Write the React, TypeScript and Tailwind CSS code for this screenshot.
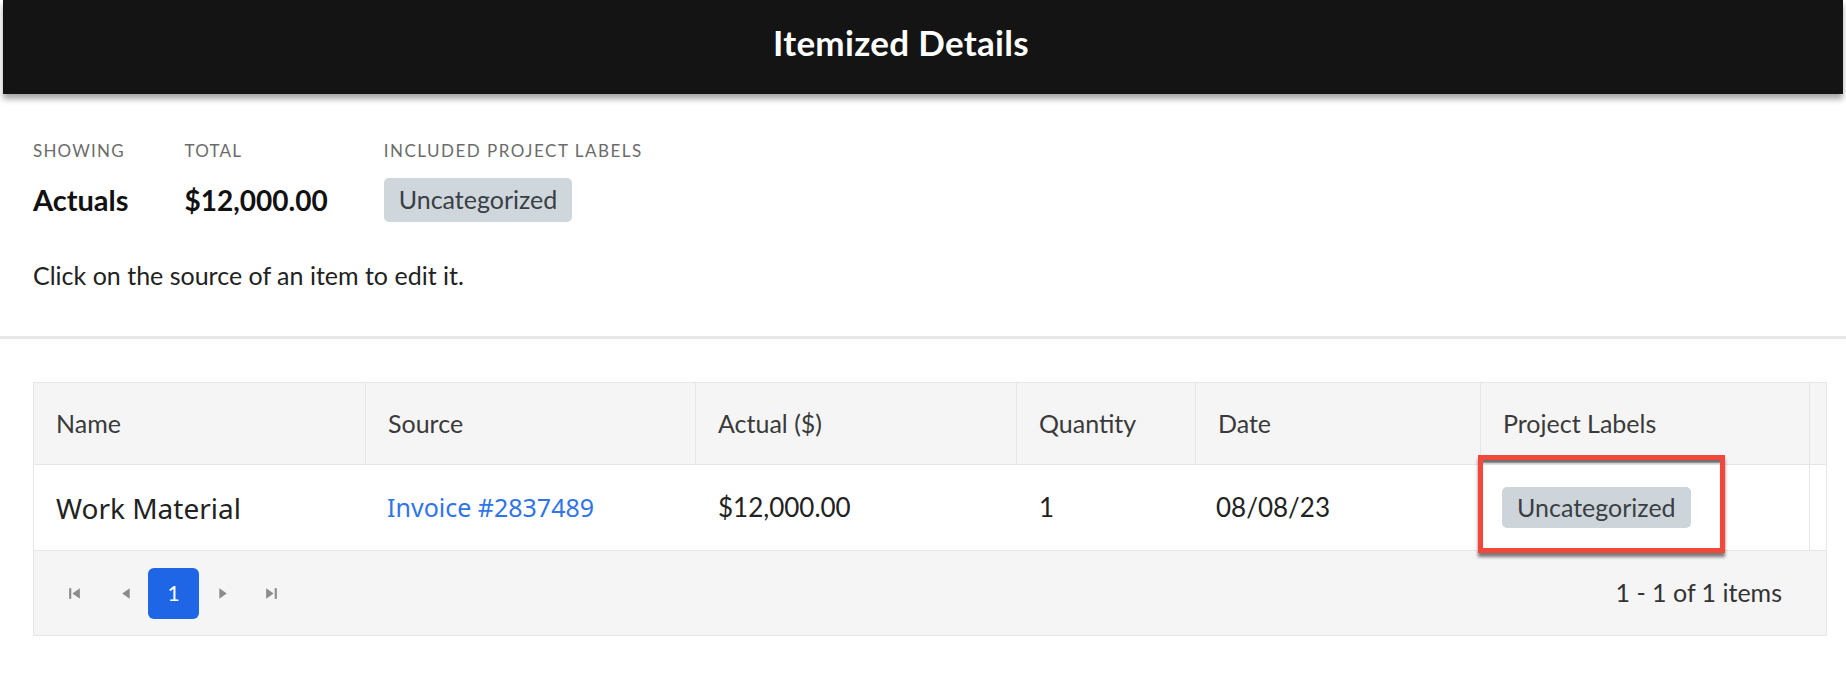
import React from 'react';

const cols = 'grid grid-cols-[332px_330px_321px_179px_285px_329px_1fr]';

function PagerIcon({ kind }: { kind: 'first' | 'prev' | 'next' | 'last' }) {
  return (
    <svg width="15" height="15" viewBox="0 0 14 14" className="text-[#8c8c8c]" fill="currentColor">
      {kind === 'first' && (
        <>
          <rect x="2" y="2" width="2" height="10" />
          <path d="M12 2 L5 7 L12 12 Z" />
        </>
      )}
      {kind === 'prev' && <path d="M10 2 L3 7 L10 12 Z" />}
      {kind === 'next' && <path d="M4 2 L11 7 L4 12 Z" />}
      {kind === 'last' && (
        <>
          <path d="M2 2 L9 7 L2 12 Z" />
          <rect x="10" y="2" width="2" height="10" />
        </>
      )}
    </svg>
  );
}

export default function App() {
  return (
    <div className="w-full min-h-[674px] bg-white font-['Lato','Noto_Sans',sans-serif] text-[#222]">
      {/* Header bar */}
      <div className="mx-[3px] h-[94px] bg-[#141414] flex items-center justify-center pr-[44px] pb-[10px] shadow-[0_5px_6px_rgba(0,0,0,0.35)]">
        <h1 className="text-white text-[35px] font-bold tracking-[0.3px]">Itemized Details</h1>
      </div>

      {/* Summary */}
      <div className="px-[33px] pt-[47px]">
        <div className="flex gap-[56px]">
          <div className="flex flex-col">
            <span className="text-[17px] text-[#6b6b6b] tracking-[1.2px] h-[20px] leading-[20px]">SHOWING</span>
            <span className="mt-[17px] h-[44px] flex items-center text-[29px] font-bold text-[#111]">Actuals</span>
          </div>
          <div className="flex flex-col">
            <span className="text-[17px] text-[#6b6b6b] tracking-[1.2px] h-[20px] leading-[20px]">TOTAL</span>
            <span className="mt-[17px] h-[44px] flex items-center text-[28px] font-bold text-[#111]">$12,000.00</span>
          </div>
          <div className="flex flex-col">
            <span className="text-[17px] text-[#6b6b6b] tracking-[1.5px] h-[20px] leading-[20px]">INCLUDED PROJECT LABELS</span>
            <span className="mt-[17px] h-[44px] px-[15px] flex items-center self-start rounded-[5px] bg-[#cfd6dc] text-[25px] text-[#3a3f44]">
              Uncategorized
            </span>
          </div>
        </div>
        <p className="mt-[38px] text-[25px] text-[#222] leading-[30px]">Click on the source of an item to edit it.</p>
      </div>

      <div className="mt-[46px] h-[3px] bg-[#e8e8e8]" />

      {/* Table */}
      <div className="ml-[33px] mr-[19px] mt-[43px] border border-[#e6e6e6] bg-white">
        <div className={`${cols} h-[82px] bg-[#f5f5f5] text-[25px] text-[#3a3a3a] border-b border-[#e6e6e6]`}>
          {['Name', 'Source', 'Actual ($)', 'Quantity', 'Date', 'Project Labels', ''].map((h, i) => (
            <div key={i} className={`flex items-center px-[22px] ${i < 6 ? 'border-r border-[#e6e6e6]' : ''}`}>
              {h}
            </div>
          ))}
        </div>
        <div className={`${cols} h-[86px] text-[26px] items-center border-b border-[#e6e6e6]`}>
          <div className="px-[22px] text-[28px] text-[#222] font-['Noto_Sans',sans-serif]">Work Material</div>
          <div className="px-[21px] text-[#2f74e8] font-['Noto_Sans',sans-serif] text-[25px]">Invoice #2837489</div>
          <div className="px-[22px] text-[#222]">$12,000.00</div>
          <div className="px-[22px] text-[#222]">1</div>
          <div className="px-[20px] text-[#222]">08/08/23</div>
          <div className="relative h-full flex items-center px-[21px] border-r border-[#e6e6e6]">
            <span className="h-[41px] px-[15px] flex items-center rounded-[5px] bg-[#cdd5db] text-[25px] text-[#3a3f44]">
              Uncategorized
            </span>
            <div className="absolute left-[-3px] top-[-10px] w-[247px] h-[98px] border-[5px] border-[#f2473b] shadow-[inset_0_4px_2px_-1px_rgba(0,0,0,0.55),0_4px_3px_rgba(0,0,0,0.5)]" />
          </div>
          <div />
        </div>
        <div className="h-[84px] bg-[#f5f5f5] flex items-center justify-between pl-[24px] pr-[44px]">
          <div className="flex items-center">
            <span className="w-[32px] flex justify-center"><PagerIcon kind="first" /></span>
            <span className="w-[44px] flex justify-center ml-[14px]"><PagerIcon kind="prev" /></span>
            <span className="w-[51px] h-[51px] rounded-[6px] bg-[#1f66e6] text-white text-[21px] flex items-center justify-center">1</span>
            <span className="w-[46px] flex justify-center"><PagerIcon kind="next" /></span>
            <span className="w-[52px] flex justify-center"><PagerIcon kind="last" /></span>
          </div>
          <span className="text-[25px] text-[#333]">1 - 1 of 1 items</span>
        </div>
      </div>
    </div>
  );
}
